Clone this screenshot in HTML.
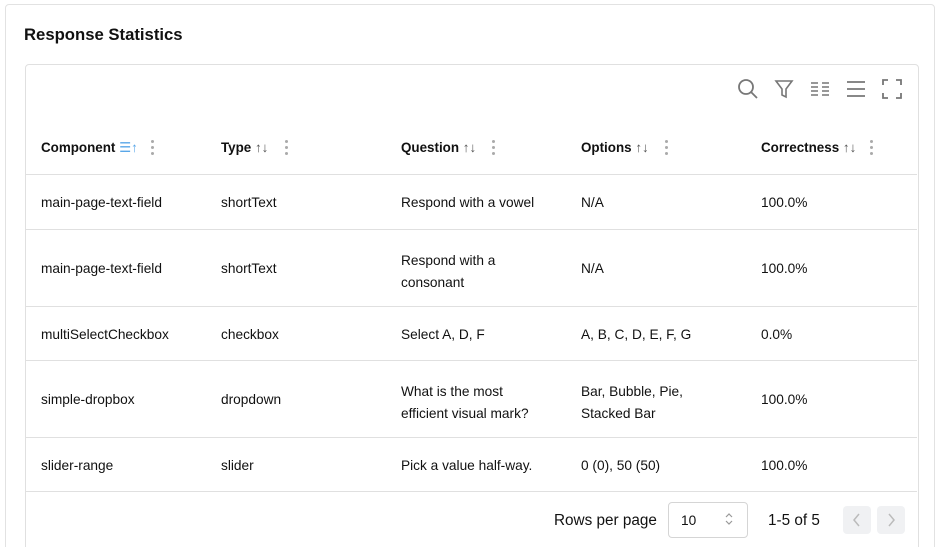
<!DOCTYPE html>
<html><head><style>
html,body{margin:0;height:547px;overflow:hidden;}
body{background:#fff;font-family:"Liberation Sans",sans-serif;color:#111;position:relative;}
.card{position:absolute;left:5px;top:4px;width:928px;height:560px;border:1px solid #e2e2e2;border-radius:4px;}
h1{position:absolute;left:24px;top:25px;margin:0;font-size:16.7px;font-weight:bold;}
.box{position:absolute;left:25px;top:64px;width:892px;height:500px;border:1px solid #e0e0e0;border-radius:4px;}
.t{position:absolute;font-size:13.7px;}
.h{font-weight:bold;font-size:13.4px;}
.line{position:absolute;left:26px;width:891px;height:1px;background:#e0e0e0;}
.icons svg{position:absolute;top:78px;}
.dots{position:absolute;width:3px;}
.dots i{display:block;width:3px;height:3px;border-radius:50%;background:#aaa;margin-bottom:3px;}
.sort{color:#555;font-weight:normal;}
</style></head><body>
<div class="card"></div>
<h1>Response Statistics</h1>
<div class="box"></div>
<div class="icons">
<svg style="left:737px" width="22" height="22" viewBox="0 0 22 22" fill="none" stroke="#777" stroke-width="1.8"><circle cx="9" cy="9" r="7"/><path d="M14 14l6 6"/></svg>
<svg style="left:774px" width="20" height="22" viewBox="0 0 20 22" fill="none" stroke="#777" stroke-width="1.6"><path d="M2 3h16l-6 8v8l-4-2v-6z"/></svg>
<svg style="left:810px" width="20" height="22" viewBox="0 0 20 22" fill="none" stroke="#777" stroke-width="1.5"><path d="M1 5h7M1 9h7M1 13h7M1 17h7M12 5h7M12 9h7M12 13h7M12 17h7"/></svg>
<svg style="left:845px" width="22" height="22" viewBox="0 0 22 22" fill="none" stroke="#777" stroke-width="1.8"><path d="M2 4h18M2 11h18M2 18h18"/></svg>
<svg style="left:881px" width="22" height="22" viewBox="0 0 22 22" fill="none" stroke="#777" stroke-width="1.8"><path d="M2 7V2h5M15 2h5v5M20 15v5h-5M7 20H2v-5"/></svg>
</div>
<div class="t h" style="left:41px;top:140px">Component <span style="color:#5aa7e8;font-weight:normal">☰↑</span></div>
<div class="t h" style="left:221px;top:140px">Type <span class="sort">↑↓</span></div>
<div class="t h" style="left:401px;top:140px">Question <span class="sort">↑↓</span></div>
<div class="t h" style="left:581px;top:140px">Options <span class="sort">↑↓</span></div>
<div class="t h" style="left:761px;top:140px">Correctness <span class="sort">↑↓</span></div>
<div class="dots" style="left:151px;top:140px"><i></i><i></i><i></i></div>
<div class="dots" style="left:285px;top:140px"><i></i><i></i><i></i></div>
<div class="dots" style="left:492px;top:140px"><i></i><i></i><i></i></div>
<div class="dots" style="left:665px;top:140px"><i></i><i></i><i></i></div>
<div class="dots" style="left:870px;top:140px"><i></i><i></i><i></i></div>
<div class="line" style="top:174px"></div>
<div class="line" style="top:229px"></div>
<div class="line" style="top:306px"></div>
<div class="line" style="top:360px"></div>
<div class="line" style="top:437px"></div>
<div class="line" style="top:491px"></div>
<div class="t" style="left:41px;top:195px">main-page-text-field</div><div class="t" style="left:221px;top:195px">shortText</div><div class="t" style="left:401px;top:195px">Respond with a vowel</div><div class="t" style="left:581px;top:195px">N/A</div><div class="t" style="left:761px;top:195px">100.0%</div>
<div class="t" style="left:41px;top:261px">main-page-text-field</div><div class="t" style="left:221px;top:261px">shortText</div><div class="t" style="left:401px;top:250px;line-height:22px">Respond with a<br>consonant</div><div class="t" style="left:581px;top:261px">N/A</div><div class="t" style="left:761px;top:261px">100.0%</div>
<div class="t" style="left:41px;top:327px">multiSelectCheckbox</div><div class="t" style="left:221px;top:327px">checkbox</div><div class="t" style="left:401px;top:327px">Select A, D, F</div><div class="t" style="left:581px;top:327px">A, B, C, D, E, F, G</div><div class="t" style="left:761px;top:327px">0.0%</div>
<div class="t" style="left:41px;top:392px">simple-dropbox</div><div class="t" style="left:221px;top:392px">dropdown</div><div class="t" style="left:401px;top:381px;line-height:22px">What is the most<br>efficient visual mark?</div><div class="t" style="left:581px;top:381px;line-height:22px">Bar, Bubble, Pie,<br>Stacked Bar</div><div class="t" style="left:761px;top:392px">100.0%</div>
<div class="t" style="left:41px;top:458px">slider-range</div><div class="t" style="left:221px;top:458px">slider</div><div class="t" style="left:401px;top:458px">Pick a value half-way.</div><div class="t" style="left:581px;top:458px">0 (0), 50 (50)</div><div class="t" style="left:761px;top:458px">100.0%</div>
<div class="t" style="left:554px;top:512px;font-size:15.3px">Rows per page</div>
<div style="position:absolute;left:668px;top:502px;width:78px;height:34px;border:1px solid #d5d5d5;border-radius:4px;"></div>
<div class="t" style="left:681px;top:513px">10</div>
<svg style="position:absolute;left:725px;top:513px" width="8" height="12" viewBox="0 0 8 12" fill="none" stroke="#999" stroke-width="1.2"><path d="M1 4l3-3 3 3M1 8l3 3 3-3"/></svg>
<div class="t" style="left:768px;top:512px;font-size:15.3px">1-5 of 5</div>
<div style="position:absolute;left:843px;top:506px;width:28px;height:28px;background:#f0f1f3;border-radius:4px;"><svg width="28" height="28" viewBox="0 0 28 28" fill="none" stroke="#bbb" stroke-width="1.5"><path d="M16 8l-5 6 5 6"/></svg></div>
<div style="position:absolute;left:877px;top:506px;width:28px;height:28px;background:#f0f1f3;border-radius:4px;"><svg width="28" height="28" viewBox="0 0 28 28" fill="none" stroke="#bbb" stroke-width="1.5"><path d="M12 8l5 6-5 6"/></svg></div>
</body></html>
